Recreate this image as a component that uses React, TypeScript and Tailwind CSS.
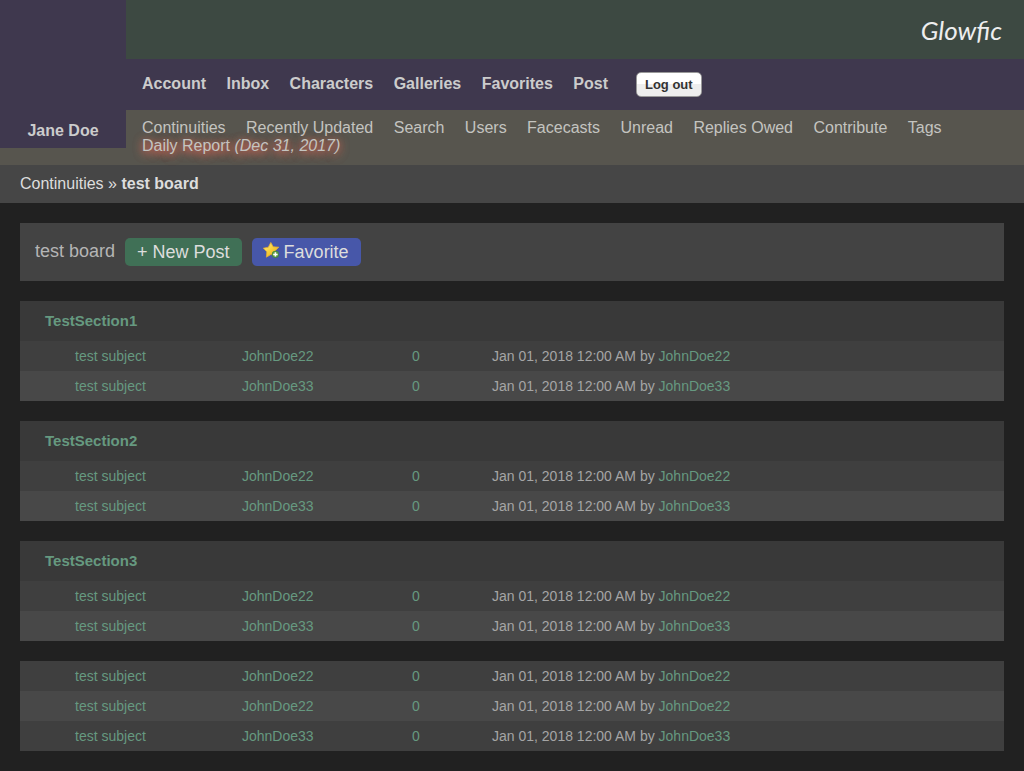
import React from "react";

type Post = { subject: string; author: string; replies: number; updated: string };
type Section = { name?: string; posts: Post[] };

const updated = "Jan 01, 2018 12:00 AM";
const post = (author: string): Post => ({ subject: "test subject", author, replies: 0, updated });

const sections: Section[] = [
  { name: "TestSection1", posts: [post("JohnDoe22"), post("JohnDoe33")] },
  { name: "TestSection2", posts: [post("JohnDoe22"), post("JohnDoe33")] },
  { name: "TestSection3", posts: [post("JohnDoe22"), post("JohnDoe33")] },
  { posts: [post("JohnDoe22"), post("JohnDoe22"), post("JohnDoe33")] },
];

const accountLinks = ["Account", "Inbox", "Characters", "Galleries", "Favorites", "Post"];
const siteLinks = [
  "Continuities",
  "Recently Updated",
  "Search",
  "Users",
  "Facecasts",
  "Unread",
  "Replies Owed",
  "Contribute",
  "Tags",
];

function StarAddIcon() {
  return (
    <svg viewBox="0 0 16 16" className="h-4 w-4" aria-hidden="true">
      <defs>
        <linearGradient id="star-fill" x1="0" y1="0" x2="1" y2="1">
          <stop offset="0" stopColor="#fff08a" />
          <stop offset="0.5" stopColor="#f8cf38" />
          <stop offset="1" stopColor="#e39a1c" />
        </linearGradient>
      </defs>
      <path
        d="M7.8 .5 10.2 4.8 15.8 5.2 12 9 12.8 14.4 8 12.4 3.4 15.2 3.8 9.8 .3 6.2 5.3 5.2Z"
        fill="url(#star-fill)"
        stroke="#e0ac35"
        strokeWidth="0.8"
        strokeLinejoin="round"
      />
      <circle cx="12.4" cy="12.4" r="3.3" fill="#5fa04a" stroke="#35803a" strokeWidth="0.6" />
      <path d="M12.4 10.2v4.4M10.2 12.4h4.4" stroke="#fff" strokeWidth="1.5" />
    </svg>
  );
}

function Header() {
  return (
    <header className="flex items-start bg-[#57554e]">
      <div className="flex h-[148px] w-[126px] shrink-0 items-end justify-center bg-[#3f384e] pb-[7px]">
        <a href="#profile" className="font-bold text-[#ccc]">
          Jane Doe
        </a>
      </div>
      <div className="min-w-0 flex-1">
        <div className="flex h-[59px] items-center justify-end bg-[#3d4942] pr-[22px]">
          <a href="#home" className="font-['Lato',sans-serif] text-[26px] leading-8 text-[#eee] italic">
            Glowfic
          </a>
        </div>
        <nav aria-label="Account" className="flex h-[51px] items-center bg-[#3f384e] px-2 font-bold text-[#ccc]">
          <div className="pb-0.5">
            {accountLinks.map((label) => (
              <React.Fragment key={label}>
                <a href="#account" className="px-2">
                  {label}
                </a>{" "}
              </React.Fragment>
            ))}
          </div>
          <button
            type="button"
            className="ml-5 h-[25px] rounded-[5px] border border-[#999] bg-linear-to-b from-white from-50% to-[#eee] to-50% px-2 text-[13px] leading-5 font-bold text-[#333]"
          >
            Log out
          </button>
        </nav>
        <nav aria-label="Site" className="px-2 pt-[9px] pb-[10px] leading-[18px] text-[#c4c4c0]">
          {siteLinks.map((label) => (
            <React.Fragment key={label}>
              <a href="#site" className="inline-block px-2">
                {label}
              </a>{" "}
            </React.Fragment>
          ))}
          <a href="#report" className="inline-block px-2 [text-shadow:0_2px_10px_#ff6e5a,0_2px_10px_#ff6e5a80]">
            Daily Report <em>(Dec 31, 2017)</em>
          </a>
        </nav>
      </div>
    </header>
  );
}

function PostTable({ section }: { section: Section }) {
  return (
    <table className="w-full table-fixed border-collapse text-left text-sm text-[#a5a5a5]">
      <colgroup>
        <col className="w-[212px]" />
        <col className="w-[170px]" />
        <col className="w-20" />
        <col />
      </colgroup>
      {section.name && (
        <thead>
          <tr className="h-10 bg-[#393939]">
            <th colSpan={4} className="pl-[25px] text-[15px] font-bold">
              <a href="#section" className="text-[#669980]">
                {section.name}
              </a>
            </th>
          </tr>
        </thead>
      )}
      <tbody>
        {section.posts.map((p, i) => (
          <tr key={i} className="h-[30px] odd:bg-[#3f3f3f] even:bg-[#484848]">
            <td className="pl-[55px]">
              <a href="#post" className="text-[#669980]">
                {p.subject}
              </a>
            </td>
            <td className="pl-[10px]">
              <a href="#user" className="text-[#669980]">
                {p.author}
              </a>
            </td>
            <td className="pl-[10px]">
              <a href="#stats" className="text-[#669980]">
                {p.replies}
              </a>
            </td>
            <td className="pl-[10px]">
              {p.updated} by{" "}
              <a href="#user" className="text-[#669980]">
                {p.author}
              </a>
            </td>
          </tr>
        ))}
      </tbody>
    </table>
  );
}

export default function App() {
  return (
    <div className="min-h-screen bg-[#212121] font-['Liberation_Sans',Arial,sans-serif] text-base leading-5">
      <Header />
      <nav aria-label="Breadcrumb" className="bg-[#464646] px-5 py-[9px] text-[#ddd]">
        <a href="#continuities">Continuities</a> » <b>test board</b>
      </nav>
      <main className="flex flex-col gap-5 p-5">
        <div className="flex items-center gap-[10px] bg-[#434343] p-[15px] text-lg leading-7">
          <h1 className="pb-0.5 leading-[26px] text-[#b5b5b5]">test board</h1>
          <a href="#new" className="rounded-[5px] bg-[#407056] px-3 text-[#ddd]">
            + New Post
          </a>
          <a href="#favorite" className="flex items-center gap-[5px] rounded-[5px] bg-[#4757a9] pr-3 pl-[11px] text-[#ddd]">
            <span className="pb-1">
              <StarAddIcon />
            </span>
            Favorite
          </a>
        </div>
        {sections.map((section, i) => (
          <PostTable key={i} section={section} />
        ))}
      </main>
    </div>
  );
}
